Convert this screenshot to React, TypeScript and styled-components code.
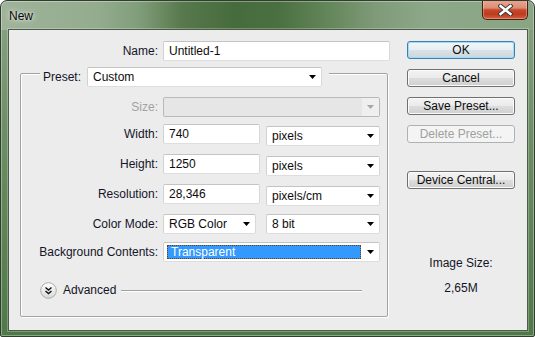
import React from "react";
import styled, { createGlobalStyle, css } from "styled-components";

const Global = createGlobalStyle`
  html, body { margin: 0; padding: 0; background: #fff; }
  body {
    width: 535px; height: 337px; overflow: hidden;
    font-family: "Liberation Sans", Arial, sans-serif;
  }
  * { box-sizing: border-box; }
`;

const Window = styled.div`
  width: 535px;
  height: 337px;
  display: flex;
  flex-direction: column;
  border: 1px solid #2f3d2c;
  border-radius: 7px 7px 2px 2px;
  overflow: hidden;
  background:
    linear-gradient(90deg, #9fb39a 0%, #94ac8e 18%, #809d79 26%, #57794d 34%, #466b3c 44%, #4a6f40 52%, #5f8356 60%, #7e9a77 70%, #8da888 80%, #8aa584 100%) top / 100% 29px no-repeat,
    linear-gradient(180deg, #8aa485 0%, #6c8e64 40%, #4f7848 100%);
  box-shadow: inset 0 0 0 1px rgba(255, 255, 255, 0.35);
`;

const TitleBar = styled.div`
  height: 28px;
  flex-shrink: 0;
  display: flex;
  align-items: flex-start;
  justify-content: space-between;
  padding-left: 8px;
`;

const Title = styled.div`
  margin-top: 8px;
  font-size: 12px;
  line-height: 14px;
  color: #0a0a0a;
  text-shadow: 0 0 6px rgba(255, 255, 255, 0.85), 0 0 3px rgba(255, 255, 255, 0.6);
`;

const CloseButton = styled.div`
  width: 46px;
  height: 20px;
  margin-top: -1px;
  margin-right: 6px;
  border: 1px solid #4a1d12;
  border-top: none;
  border-radius: 0 0 5px 5px;
  background: linear-gradient(180deg, #e9a897 0%, #de8c74 42%, #c6472a 52%, #bf3c1e 75%, #d2603f 100%);
  box-shadow: inset 0 0 0 1px rgba(255, 255, 255, 0.3);
  display: flex;
  align-items: center;
  justify-content: center;
`;

const Client = styled.div`
  flex: 1;
  margin: 0 6px 5px 7px;
  border: 1px solid #4d5c4a;
  box-shadow: 0 0 0 1px rgba(255, 255, 255, 0.25);
  background: #ececec;
  display: flex;
  gap: 17px;
  padding: 11px 0 0 11px;
  font-size: 12px;
  color: #141428;
`;

const LeftColumn = styled.div`
  width: 370px;
  display: flex;
  flex-direction: column;
`;

const RightColumn = styled.div`
  width: 108px;
  display: flex;
  flex-direction: column;
`;

const Row = styled.div<{ $mt?: number }>`
  display: flex;
  align-items: flex-start;
  gap: 5px;
  margin-top: ${(p) => p.$mt ?? 0}px;
`;

const Label = styled.div<{ $w?: number; $disabled?: boolean }>`
  ${(p) => (p.$w ? css`width: ${p.$w}px;` : "")}
  flex-shrink: 0;
  text-align: right;
  line-height: 20px;
  white-space: nowrap;
  color: ${(p) => (p.$disabled ? "#a2a2a2" : "#141428")};
`;

const fieldBox = css`
  height: 20px;
  border: 1px solid;
  border-color: #c4c4c4 #d8d8d8 #dedede #d2d2d2;
  border-radius: 2px;
  background: #fff;
  display: flex;
  align-items: center;
  color: #0c0c0c;
  white-space: nowrap;
`;

const TextField = styled.div<{ $w: number }>`
  ${fieldBox}
  width: ${(p) => p.$w}px;
  padding-left: 5px;
`;

const Combo = styled.div<{ $w: number; $mt?: number; $ml?: number; $disabled?: boolean }>`
  ${fieldBox}
  width: ${(p) => p.$w}px;
  margin-top: ${(p) => p.$mt ?? 0}px;
  margin-left: ${(p) => p.$ml ?? 0}px;
  ${(p) =>
    p.$disabled &&
    css`
      background: #e6e6e6;
      border-color: #b9b9b9;
    `}
`;

const ComboText = styled.div<{ $selected?: boolean }>`
  flex: 1;
  height: 100%;
  display: flex;
  align-items: center;
  padding-left: 5px;
  ${(p) =>
    p.$selected &&
    css`
      margin: 2px 1px 2px 3px;
      height: auto;
      align-self: stretch;
      padding-left: 3px;
      background: #3399ff;
      color: #fff;
      border: 1px dotted #6b3d05;
    `}
`;

const ArrowBox = styled.div<{ $disabled?: boolean }>`
  width: 17px;
  height: 100%;
  flex-shrink: 0;
  display: flex;
  align-items: center;
  justify-content: center;
  ${(p) => p.$disabled && css`background: #efefef;`}
`;

const Group = styled.div`
  margin-top: 12px;
  width: 368px;
  border: 1px solid #a3a3a3;
  border-radius: 2px;
  box-shadow: 1px 1px 0 #fff, inset 1px 1px 0 #fff;
  padding: 0 7px 18px 0;
  display: flex;
  flex-direction: column;
`;

const PresetRow = styled.div`
  align-self: flex-start;
  margin-top: -7px;
  margin-left: 19px;
  padding: 0 7px 0 3px;
  background: #ececec;
  display: flex;
  align-items: flex-start;
  gap: 6px;
`;

const AdvancedRow = styled.div`
  margin-top: 20px;
  margin-left: 19px;
  display: flex;
  align-items: center;
  height: 16px;
`;

const AdvancedText = styled.span`
  margin-left: 6px;
  line-height: 16px;
`;

const Rule = styled.div`
  flex: 1;
  height: 1px;
  margin: 0 18px 0 5px;
  background: #a0a0a0;
  box-shadow: 0 1px 0 #fff;
`;

const Button = styled.div<{ $mt?: number; $default?: boolean; $disabled?: boolean }>`
  height: 18px;
  margin-top: ${(p) => p.$mt ?? 0}px;
  border: 1px solid #707070;
  border-radius: 3px;
  background: linear-gradient(180deg, #f3f3f3 0%, #ebebeb 48%, #dddddd 52%, #cfcfcf 100%);
  box-shadow: inset 0 0 0 1px #fbfbfb;
  display: flex;
  align-items: center;
  justify-content: center;
  color: #0c0c0c;
  line-height: 16px;
  ${(p) =>
    p.$default &&
    css`
      border-color: #3c7fb1;
      box-shadow: inset 0 0 0 1px #9fdcf7;
      background: linear-gradient(180deg, #f2f6f8 0%, #e8eef1 48%, #d9e2e7 52%, #ccd6dc 100%);
    `}
  ${(p) =>
    p.$disabled &&
    css`
      border-color: #adb2b5;
      background: #f4f4f4;
      box-shadow: none;
      color: #a0a0a0;
    `}
`;

const InfoText = styled.div<{ $mt: number }>`
  margin-top: ${(p) => p.$mt}px;
  text-align: center;
  line-height: 15px;
  color: #141428;
`;

const Arrow = ({ disabled }: { disabled?: boolean }) => (
  <svg width="7" height="4" viewBox="0 0 7 4">
    <path d="M0 0 H7 L3.5 4 Z" fill={disabled ? "#a8a8a8" : "#000"} />
  </svg>
);

const CloseIcon = () => (
  <svg width="15" height="12" viewBox="0 0 15 12">
    <path d="M2.5 2 L12.5 10 M12.5 2 L2.5 10" stroke="#3a3a3a" strokeWidth="4.4" strokeLinecap="square" />
    <path d="M2.5 2 L12.5 10 M12.5 2 L2.5 10" stroke="#ffffff" strokeWidth="2.4" strokeLinecap="square" />
  </svg>
);

const AdvancedIcon = () => (
  <svg width="17" height="17" viewBox="0 0 17 17">
    <defs>
      <linearGradient id="advg" x1="0" y1="0" x2="0" y2="1">
        <stop offset="0" stopColor="#ffffff" />
        <stop offset="1" stopColor="#d9d9d9" />
      </linearGradient>
    </defs>
    <circle cx="8.5" cy="8.5" r="7.8" fill="url(#advg)" stroke="#a9a9a9" strokeWidth="1" />
    <path d="M5.5 5.5 L8.5 8 L11.5 5.5 M5.5 9 L8.5 11.5 L11.5 9" fill="none" stroke="#111" strokeWidth="1.4" />
  </svg>
);

type ComboProps = {
  w: number;
  text?: string;
  mt?: number;
  ml?: number;
  disabled?: boolean;
  selected?: boolean;
};

const ComboBox = ({ w, text, mt, ml, disabled, selected }: ComboProps) => (
  <Combo $w={w} $mt={mt} $ml={ml} $disabled={disabled}>
    <ComboText $selected={selected}>{text}</ComboText>
    <ArrowBox $disabled={disabled}>
      <Arrow disabled={disabled} />
    </ArrowBox>
  </Combo>
);

export default function App() {
  return (
    <>
      <Global />
      <Window>
        <TitleBar>
          <Title>New</Title>
          <CloseButton>
            <CloseIcon />
          </CloseButton>
        </TitleBar>
        <Client>
          <LeftColumn>
            <Row>
              <Label $w={138}>Name:</Label>
              <TextField $w={227}>Untitled-1</TextField>
            </Row>
            <Group>
              <PresetRow>
                <Label>Preset:</Label>
                <ComboBox w={235} text="Custom" />
              </PresetRow>
              <Row $mt={10}>
                <Label $w={137} $disabled>
                  Size:
                </Label>
                <ComboBox w={217} disabled />
              </Row>
              <Row $mt={7}>
                <Label $w={137}>Width:</Label>
                <TextField $w={97}>740</TextField>
                <ComboBox w={114} mt={2} ml={1} text="pixels" />
              </Row>
              <Row $mt={8}>
                <Label $w={137}>Height:</Label>
                <TextField $w={97}>1250</TextField>
                <ComboBox w={114} mt={2} ml={1} text="pixels" />
              </Row>
              <Row $mt={8}>
                <Label $w={137}>Resolution:</Label>
                <TextField $w={97}>28,346</TextField>
                <ComboBox w={114} mt={2} ml={1} text="pixels/cm" />
              </Row>
              <Row $mt={8}>
                <Label $w={137}>Color Mode:</Label>
                <ComboBox w={93} text="RGB Color" />
                <ComboBox w={114} ml={5} text="8 bit" />
              </Row>
              <Row $mt={8}>
                <Label $w={137}>Background Contents:</Label>
                <ComboBox w={217} text="Transparent" selected />
              </Row>
              <AdvancedRow>
                <AdvancedIcon />
                <AdvancedText>Advanced</AdvancedText>
                <Rule />
              </AdvancedRow>
            </Group>
          </LeftColumn>
          <RightColumn>
            <Button $default>OK</Button>
            <Button $mt={10}>Cancel</Button>
            <Button $mt={10}>Save Preset...</Button>
            <Button $mt={10} $disabled>
              Delete Preset...
            </Button>
            <Button $mt={28}>Device Central...</Button>
            <InfoText $mt={67}>Image Size:</InfoText>
            <InfoText $mt={10}>2,65M</InfoText>
          </RightColumn>
        </Client>
      </Window>
    </>
  );
}
